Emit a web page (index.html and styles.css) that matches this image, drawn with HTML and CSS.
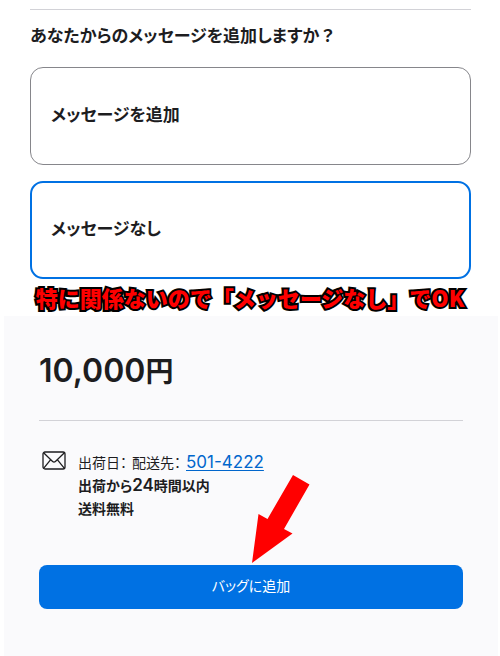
FILE: index.html
```html
<!DOCTYPE html>
<html lang="ja">
<head>
	<meta charset="utf-8">
	<meta name="viewport" content="width=device-width, initial-scale=1">
	<title>バッグに追加</title>
	<link rel="stylesheet" href="styles.css">
</head>
<body>
	<form>
		<fieldset class="message_box">
			<legend>あなたからのメッセージを追加しますか<span class="mark">？</span></legend>
			<div class="option">
				<input type="radio" name="message" id="message_add">
				<label for="message_add">メッセージを追加</label>
			</div>
			<div class="option">
				<input type="radio" name="message" id="message_none" checked>
				<label for="message_none">メッセージなし</label>
			</div>
		</fieldset>

		<p class="note">特に関係ないので「メッセージなし」でOK</p>

		<div class="summary">
			<p class="price">10,000<span class="yen">円</span></p>
			<div class="delivery">
				<svg class="mail" viewBox="0 0 24 20" aria-hidden="true">
					<rect x="1" y="1" width="22" height="17" rx="2"/>
					<path d="M1.6 1.8 10.6 10.4Q12 11.6 13.4 10.4L22.4 1.8M1.6 17.3 8.7 8.7M22.4 17.3 15.3 8.7"/>
				</svg>
				<div class="delivery_text">
					<p><span class="term">出荷日：</span><span class="term">配送先：</span><a href="#" class="num">501-4222</a></p>
					<p class="strong">出荷から<span class="num">24</span>時間以内</p>
					<p class="strong">送料無料</p>
				</div>
			</div>
			<div class="button_box">
				<svg class="arrow" viewBox="0 0 60 90" aria-hidden="true">
					<path d="M42 0 58.5 9.5 33 54 41.5 58.5 1 88 7.500 39 16.500 44z"/>
				</svg>
				<button type="button">バッグに追加</button>
			</div>
		</div>
	</form>
</body>
</html>
```
FILE: styles.css
```css
*{margin: 0; padding: 0; box-sizing: border-box;}
body{background-color: #fff; color: #1d1d1f;
	font-family: "Noto Sans CJK JP", sans-serif; font-feature-settings: "palt";}

/*メッセージの選択*/
.message_box{margin: 9px 29px 0 30px; border: 0; border-top: 1px solid #d2d2d7;}
.message_box legend{float: left; width: 100%; padding-top: 13px; margin-bottom: 20px;
	font-size: 17px; line-height: 24px; font-weight: 700;}
.mark{font-feature-settings: normal;}
.option{position: relative; clear: both; margin-bottom: 16px;}
.option input{position: absolute; opacity: 0;}
.option label{display: block; padding: 34px 20px 38px; border: 1px solid #86868b;
	border-radius: 13px; font-size: 17px; line-height: 24px; font-weight: 700;}
.option input:checked + label{padding: 33px 19px 37px; border: 2px solid #0071e3;}
.option:last-child{margin-bottom: 0;}

.note{padding: 2px 0 3px; text-align: center; white-space: nowrap;
	font-size: 22px; line-height: 32px; font-weight: 900; color: #f00;
	font-feature-settings: normal;
	-webkit-text-stroke: 4px #000; paint-order: stroke fill;}

/*金額と配送*/
.summary{margin: 0 2px 0 4px; padding: 33px 35px 48px; background-color: #fafafc;}
.price{padding-bottom: 26px; border-bottom: 1px solid #d2d2d7;
	font-family: Inter, "Noto Sans CJK JP", sans-serif; font-size: 32px;
	line-height: 44px; font-weight: 600;}
.price .yen{font-size: 28px; font-weight: 700;}
.delivery{display: flex; gap: 12px; padding: 30px 0 45px 3px;}
.mail{width: 24px; height: 20px; fill: none; stroke: #1d1d1f; stroke-width: 1.3;}
.delivery_text{font-size: 14px; line-height: 23px;}
.term{margin-right: 5px;}
.strong{font-weight: 700;}
.num{font-family: Inter, sans-serif; font-size: 17px; line-height: 20px;}
.strong .num{font-weight: 600;}
.delivery a{color: #06c; text-underline-offset: 2px;}

.button_box{position: relative;}
.button_box button{display: block; width: 100%; padding: 8px 10px 12px; border: 0;
	border-radius: 8px; background-color: #0071e3; color: #fff;
	font-family: inherit; font-feature-settings: inherit; font-size: 14px; line-height: 24px;}
.arrow{position: absolute; left: 50%; bottom: 100%; width: 60px; height: 90px; fill: #f00;}
```
